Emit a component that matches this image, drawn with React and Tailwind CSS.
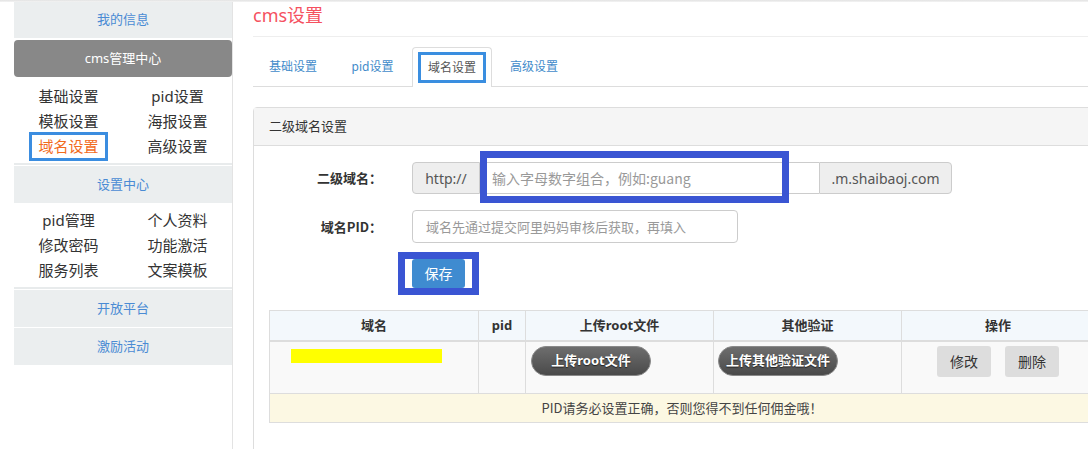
import React from "react";

const font = {
  fontFamily: '"Noto Sans", "Noto Sans CJK SC", sans-serif',
};

// fullwidth punctuation needs the CJK face first
const cjk =
  "font-[family-name:'Noto_Sans_CJK_SC','Noto_Sans',sans-serif] [text-spacing-trim:space-all]";

const sideLinks1 = [
  ["基础设置", "pid设置"],
  ["模板设置", "海报设置"],
  ["域名设置", "高级设置"],
];

const sideLinks2 = [
  ["pid管理", "个人资料"],
  ["修改密码", "功能激活"],
  ["服务列表", "文案模板"],
];

const SideBlock = ({ children, className = "" }) => (
  <div
    className={`flex items-center justify-center bg-[#ebeeef] text-[13px] text-[#4a8bd4] ${className}`}
  >
    {children}
  </div>
);

const LinkGrid = ({ rows, active }) => (
  <div className="grid grid-cols-2 py-[1px]">
    {rows.flat().map((label) => (
      <div
        key={label}
        className="flex h-[25px] items-center justify-center text-[15px] text-[#333]"
      >
        {label === active ? (
          <span className="border-[3px] border-[#3b8de0] px-[6px] leading-[23px] text-[#f26b1d]">
            {label}
          </span>
        ) : (
          label
        )}
      </div>
    ))}
  </div>
);

const Sidebar = () => (
  <div className="flex w-[233px] shrink-0 flex-col border-r border-[#e3e3e3] pl-[14px]">
    <SideBlock className="h-[36px]">我的信息</SideBlock>
    <div className="mt-[2px] flex h-[37px] items-center justify-center rounded-[4px] bg-[#888888] text-[13px] text-white">
      cms管理中心
    </div>
    <div className="pt-[6px] pb-[3px]">
      <LinkGrid rows={sideLinks1} active="域名设置" />
    </div>
    <div className="border-t-[2px] border-[#e8ebec] pt-[1px]">
      <SideBlock className="h-[37px]">设置中心</SideBlock>
    </div>
    <div className="pt-[4px] pb-[3px]">
      <LinkGrid rows={sideLinks2} />
    </div>
    <div className="border-t-[2px] border-[#e8ebec] pt-[1px]">
      <SideBlock className="h-[37px]">开放平台</SideBlock>
    </div>
    <div className="h-[1px] bg-white" />
    <SideBlock className="h-[37px]">激励活动</SideBlock>
  </div>
);

const tabs = [
  ["基础设置", "w-[80px]"],
  ["pid设置", "w-[75px]"],
  ["域名设置", "w-[80px]"],
  ["高级设置", "w-[80px]"],
];

const Tabs = () => (
  <div className="mt-[10px] flex border-b border-[#ddd]">
    {tabs.map(([t, w]) =>
      t === "域名设置" ? (
        <div
          key={t}
          className={`-mb-[1px] mr-[2px] rounded-t-[4px] border border-b-0 border-[#ddd] bg-white px-[5px] pt-[4px] pb-[4px] ${w}`}
        >
          <span className="block border-[3px] border-[#3a8ee0] py-[3px] text-center text-[12px] leading-[19px] text-[#555]">
            {t}
          </span>
        </div>
      ) : (
        <div
          key={t}
          className={`mr-[2px] py-[10px] text-center text-[12px] leading-[19px] text-[#428bca] ${w}`}
        >
          {t}
        </div>
      )
    )}
  </div>
);

const DarkPill = ({ children }) => (
  <span className="inline-flex h-[30px] w-[120px] items-center justify-center rounded-full border border-[#8a8a8a] bg-gradient-to-b from-[#6e6e6e] to-[#4a4a4a] text-[13px] font-bold text-white [text-shadow:0_1px_1px_#222]">
    {children}
  </span>
);

const GrayBtn = ({ children }) => (
  <span className="inline-flex h-[31px] w-[54px] items-center justify-center rounded-[3px] bg-[#dddddd] text-[14px] text-[#333]">
    {children}
  </span>
);

const DomainTable = () => (
  <table className="mt-[15px] w-[826px] border-collapse text-[13px] text-[#333]">
    <thead>
      <tr className="h-[30px] bg-[#f3f8fc] font-bold">
        <th className="w-[209px] border border-b-2 border-[#ddd]">域名</th>
        <th className="w-[47px] border border-b-2 border-[#ddd]">pid</th>
        <th className="w-[188px] border border-b-2 border-[#ddd]">上传root文件</th>
        <th className="w-[188px] border border-b-2 border-[#ddd]">其他验证</th>
        <th className="border border-b-2 border-[#ddd]">操作</th>
      </tr>
    </thead>
    <tbody>
      <tr className="h-[53px] bg-[#f9f9f9] align-top">
        <td className="border border-[#ddd] pl-[21px] pt-[7px]">
          <div className="h-[14px] w-[151px] bg-[#ffff00]" />
        </td>
        <td className="border border-[#ddd]" />
        <td className="border border-[#ddd] pl-[5px] pt-[4px]">
          <DarkPill>上传root文件</DarkPill>
        </td>
        <td className="border border-[#ddd] pl-[4px] pt-[4px]">
          <DarkPill>上传其他验证文件</DarkPill>
        </td>
        <td className="border border-[#ddd] pt-[4px]">
          <div className="flex justify-center gap-[14px]">
            <GrayBtn>修改</GrayBtn>
            <GrayBtn>删除</GrayBtn>
          </div>
        </td>
      </tr>
      <tr className="h-[29px] bg-[#fcf8e3]">
        <td
          colSpan={5}
          className={`border border-[#ddd] text-center text-[#444] ${cjk}`}
        >
          PID请务必设置正确，否则您得不到任何佣金哦！
        </td>
      </tr>
    </tbody>
  </table>
);

const Panel = () => (
  <div className="mt-[20px] w-[860px] rounded-t-[4px] border border-[#ddd] pb-[40px]">
    <div className="flex h-[38px] items-center border-b border-[#ddd] bg-[#f5f5f5] px-[15px] text-[13px] text-[#333]">
      二级域名设置
    </div>
    <div className="px-[15px] pt-[16px]">
      <div className="flex items-center">
        <div className={`w-[113px] text-right text-[13px] font-bold text-[#333] ${cjk}`}>
          二级域名：
        </div>
        <div className="ml-[30px] flex h-[32px] text-[14px]">
          <div className="flex w-[68px] items-center justify-center rounded-l-[4px] border border-[#ccc] bg-[#eee] text-[#555]">
            http://
          </div>
          <div
            className={`relative flex w-[339px] items-center border-y border-[#ccc] bg-white pl-[12px] text-[#999] ${cjk}`}
          >
            输入字母数字组合，例如:guang
            <div className="pointer-events-none absolute -top-[12px] left-0 h-[52px] w-[309px] border-[7px] border-[#3a55d3]" />
          </div>
          <div className="flex w-[133px] items-center justify-center rounded-r-[4px] border border-[#ccc] bg-[#eee] text-[#555]">
            .m.shaibaoj.com
          </div>
        </div>
      </div>
      <div className="mt-[16px] flex items-center">
        <div className={`w-[113px] text-right text-[13px] font-bold text-[#333] ${cjk}`}>
          域名PID：
        </div>
        <div
          className={`ml-[30px] flex h-[33px] w-[326px] items-center rounded-[4px] border border-[#ccc] bg-white pl-[13px] text-[13px] text-[#999] ${cjk}`}
        >
          域名先通过提交阿里妈妈审核后获取，再填入
        </div>
      </div>
      <div className="mt-[9px] ml-[129px] inline-flex border-[7px] border-[#3a55d3]">
        <div className="bg-white px-[7px]">
          <div className="flex h-[29px] w-[53px] items-center justify-center rounded-[3px] bg-[#3f8bd0] text-[14px] text-white">
            保存
          </div>
        </div>
      </div>
      <DomainTable />
    </div>
  </div>
);

export default function App() {
  return (
    <div
      className="relative h-[449px] w-[1088px] overflow-hidden bg-white"
      style={font}
    >
      <div className="h-[2px] bg-gradient-to-b from-[#e2e2e2] to-[#f4f4f4]" />
      <div className="flex h-[447px]">
        <Sidebar />
        <div className="min-w-0 flex-1 pl-[20px]">
          <div className="border-b border-[#eee] pt-[2px] pb-[10px] text-[18px] leading-[22px] text-[#f5515f]">
            cms设置
          </div>
          <Tabs />
          <Panel />
        </div>
      </div>
    </div>
  );
}
